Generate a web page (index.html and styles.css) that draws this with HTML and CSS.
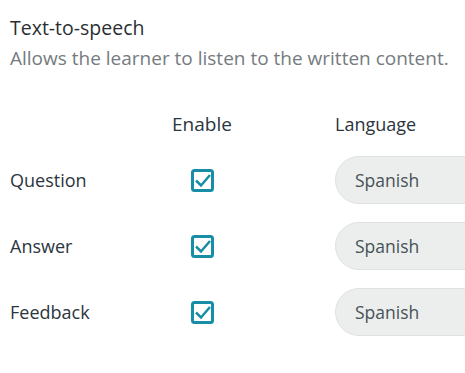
FILE: index.html
```html
<!DOCTYPE html>
<html lang="en">
<head>
<meta charset="utf-8">
<title>Text-to-speech</title>
<link rel="stylesheet" href="styles.css">
</head>
<body>
<section class="tts">
  <h2 class="tts-title">Text-to-speech</h2>
  <p class="tts-desc">Allows the learner to listen to the written content.</p>
  <div class="tts-grid">
    <div class="head"></div>
    <div class="head head-center">Enable</div>
    <div class="head head-lang">Language</div>

    <div class="label">Question</div>
    <div class="check"><svg class="cb" width="23" height="23" viewBox="0 0 23 23"><rect x="1.5" y="1.5" width="20" height="20" rx="2" fill="none" stroke="currentColor" stroke-width="3"/><polyline points="5,11.5 10,16.5 19,6" fill="none" stroke="currentColor" stroke-width="2.5"/></svg></div>
    <div class="lang"><div class="pill">Spanish</div></div>

    <div class="label">Answer</div>
    <div class="check"><svg class="cb" width="23" height="23" viewBox="0 0 23 23"><rect x="1.5" y="1.5" width="20" height="20" rx="2" fill="none" stroke="currentColor" stroke-width="3"/><polyline points="5,11.5 10,16.5 19,6" fill="none" stroke="currentColor" stroke-width="2.5"/></svg></div>
    <div class="lang"><div class="pill">Spanish</div></div>

    <div class="label">Feedback</div>
    <div class="check"><svg class="cb" width="23" height="23" viewBox="0 0 23 23"><rect x="1.5" y="1.5" width="20" height="20" rx="2" fill="none" stroke="currentColor" stroke-width="3"/><polyline points="5,11.5 10,16.5 19,6" fill="none" stroke="currentColor" stroke-width="2.5"/></svg></div>
    <div class="lang"><div class="pill">Spanish</div></div>
  </div>
</section>
</body>
</html>
```
FILE: styles.css
```css
html, body {
  margin: 0;
  padding: 0;
  background: #ffffff;
  overflow: hidden;
}
body {
  font-family: "Open Sans", "Noto Sans", sans-serif;
  font-size: 18px;
  color: #2b3540;
}
.tts {
  padding: 16px 0 0 10px;
}
.tts-title {
  margin: 0;
  font-size: 19.5px;
  font-weight: 400;
  line-height: 24px;
  color: #2a2f33;
}
.tts-desc {
  margin: 6px 0 0;
  font-size: 19px;
  line-height: 24px;
  color: #757b80;
}
.tts-grid {
  margin-top: 42px;
  display: grid;
  grid-template-columns: 130px 124px 1fr;
  row-gap: 18px;
  align-items: center;
}
.head {
  line-height: 24px;
  padding-bottom: 2px;
  color: #2b3540;
}
.head-center {
  text-align: center;
  font-size: 19px;
}
.head-lang {
  padding-left: 71px;
}
.label {
  line-height: 24px;
  color: #2b3540;
}
.check {
  display: flex;
  justify-content: center;
  color: #178ea6;
}
.cb {
  display: block;
}
.lang {
  padding-left: 71px;
}
.pill {
  width: 200px;
  height: 46px;
  box-sizing: content-box;
  border: 1px solid #dfe2e1;
  border-radius: 24px 0 0 24px;
  background: #eceeed;
  display: flex;
  align-items: center;
  padding-left: 19px;
  font-size: 17.5px;
  color: #475256;
}
```
